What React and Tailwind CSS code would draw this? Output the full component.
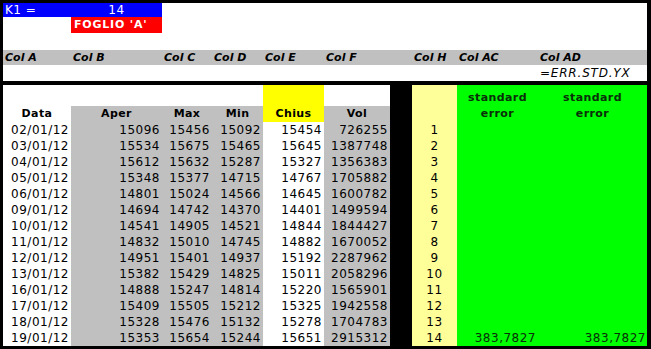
const COLS = "grid grid-cols-[68px_91px_50px_51px_61px_66px_22px_45px_81px_109px]";

const ROWS = [
  ["02/01/12", 15096, 15456, 15092, 15454, 726255],
  ["03/01/12", 15534, 15675, 15465, 15645, 1387748],
  ["04/01/12", 15612, 15632, 15287, 15327, 1356383],
  ["05/01/12", 15348, 15377, 14715, 14767, 1705882],
  ["06/01/12", 14801, 15024, 14566, 14645, 1600782],
  ["09/01/12", 14694, 14742, 14370, 14401, 1499594],
  ["10/01/12", 14541, 14905, 14521, 14844, 1844427],
  ["11/01/12", 14832, 15010, 14745, 14882, 1670052],
  ["12/01/12", 14951, 15401, 14937, 15192, 2287962],
  ["13/01/12", 15382, 15429, 14825, 15011, 2058296],
  ["16/01/12", 14888, 15247, 14814, 15220, 1565901],
  ["17/01/12", 15409, 15505, 15212, 15325, 1942558],
  ["18/01/12", 15328, 15476, 15132, 15278, 1704783],
  ["19/01/12", 15353, 15654, 15244, 15651, 2915312],
];

const LABELS = ["Col A", "Col B", "Col C", "Col D", "Col E", "Col F", "", "Col H", "Col AC", "Col AD"];

function App() {
  return (
    <div className="w-[651px] h-[349px] bg-black pt-[3px] pl-[3px] pr-[4px] pb-[3px] font-['DejaVu_Sans',sans-serif] text-black">
      {/* top info rows */}
      <div className={`${COLS} h-[14px] bg-white text-white text-[12px] leading-[14px] tracking-[0.5px]`}>
        <div className="bg-[#0000ff] pl-[2px]">K1 =</div>
        <div className="bg-[#0000ff] text-center">14</div>
      </div>
      <div className={`${COLS} h-[16px] bg-white`}>
        <div />
        <div className="bg-[#ff0000] text-white font-bold text-[11px] leading-[16px] tracking-[0.8px] pl-[3px]">
          FOGLIO 'A'
        </div>
      </div>
      <div className="h-[17px] bg-white" />
      <div className={`${COLS} h-[15px] bg-[#c0c0c0] text-[11px] leading-[15px] font-bold italic`}>
        {LABELS.map((l, i) => (
          <div key={i} className="pl-[2px] whitespace-nowrap">{l}</div>
        ))}
      </div>
      <div className={`${COLS} h-[16px] bg-white text-[12px] leading-[16px] italic tracking-[0.8px]`}>
        <div className="col-start-10 pl-[2px] whitespace-nowrap">=ERR.STD.YX</div>
      </div>
      <div className="h-[4px] bg-black" />

      {/* table header */}
      <div className={`${COLS} h-[21px] text-[11px] font-bold leading-[16px]`}>
        <div className="col-span-4 bg-white" />
        <div className="bg-[#ffff00]" />
        <div className="bg-white" />
        <div className="bg-black" />
        <div className="bg-[#ffff99]" />
        <div className="bg-[#00ff00] pt-[5px] text-center text-[#0a2e0a] tracking-[0.4px]">standard</div>
        <div className="bg-[#00ff00] pt-[5px] text-center text-[#0a2e0a] tracking-[0.4px]">standard</div>
      </div>
      <div className={`${COLS} h-[16px] text-[11px] font-bold leading-[16px] text-center`}>
        <div className="bg-white tracking-[0.4px]">Data</div>
        <div className="bg-[#c0c0c0] tracking-[0.4px]">Aper</div>
        <div className="bg-[#c0c0c0] tracking-[0.4px]">Max</div>
        <div className="bg-[#c0c0c0] tracking-[0.4px]">Min</div>
        <div className="bg-[#ffff00] tracking-[0.4px]">Chius</div>
        <div className="bg-[#c0c0c0] tracking-[0.4px]">Vol</div>
        <div className="bg-black" />
        <div className="bg-[#ffff99]" />
        <div className="bg-[#00ff00] text-[#0a2e0a] tracking-[0.4px]">error</div>
        <div className="bg-[#00ff00] text-[#0a2e0a] tracking-[0.4px]">error</div>
      </div>

      {/* data rows */}
      {ROWS.map((r, i) => {
        const last = i === ROWS.length - 1;
        return (
          <div
            key={r[0]}
            className={`${COLS} h-[16px] text-[12px] leading-[16px] tracking-[0.5px] text-right`}
          >
            <div className="bg-white pr-[2px]">{r[0]}</div>
            <div className="bg-[#c0c0c0] pr-[2px]">{r[1]}</div>
            <div className="bg-[#c0c0c0] pr-[2px]">{r[2]}</div>
            <div className="bg-[#c0c0c0] pr-[2px]">{r[3]}</div>
            <div className="bg-white pr-[2px]">{r[4]}</div>
            <div className="bg-[#c0c0c0] pr-[2px]">{r[5]}</div>
            <div className="bg-black" />
            <div className="bg-[#ffff99] text-center">{i + 1}</div>
            <div className="bg-[#00ff00] pr-[2px] text-[#0a2e0a]">{last ? "383,7827" : ""}</div>
            <div className="bg-[#00ff00] pr-[1px] text-[#0a2e0a]">{last ? "383,7827" : ""}</div>
          </div>
        );
      })}
    </div>
  );
}

export default App;
